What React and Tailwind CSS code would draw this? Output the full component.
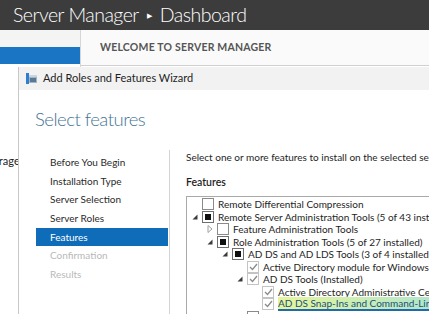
import React from 'react';

const navItems = [
  { label: 'Before You Begin', state: 'done' },
  { label: 'Installation Type', state: 'done' },
  { label: 'Server Selection', state: 'done' },
  { label: 'Server Roles', state: 'done' },
  { label: 'Features', state: 'active' },
  { label: 'Confirmation', state: 'off' },
  { label: 'Results', state: 'off' },
];

const indent = ['pl-[0px]', 'pl-[15px]', 'pl-[30px]', 'pl-[45px]', 'pl-[60px]'];

const tree = [
  { level: 0, exp: null, box: 'empty', label: 'Remote Differential Compression' },
  { level: 0, exp: 'open', box: 'partial', label: 'Remote Server Administration Tools (5 of 43 installed)' },
  { level: 1, exp: 'closed', box: 'empty', label: 'Feature Administration Tools' },
  { level: 1, exp: 'open', box: 'partial', label: 'Role Administration Tools (5 of 27 installed)' },
  { level: 2, exp: 'open', box: 'partial', label: 'AD DS and AD LDS Tools (3 of 4 installed)' },
  { level: 3, exp: null, box: 'checked', label: 'Active Directory module for Windows PowerShell' },
  { level: 3, exp: 'open', box: 'checked', label: 'AD DS Tools (Installed)' },
  { level: 4, exp: null, box: 'checked', label: 'Active Directory Administrative Center' },
  { level: 4, exp: null, box: 'checked', label: 'AD DS Snap-Ins and Command-Line Tools', hi: true },
  { level: 3, exp: null, box: 'empty', label: 'AD LDS Snap-Ins and Command-Line Tools' },
];

const Expander = ({ kind }) => {
  if (kind === 'open')
    return (
      <svg width="6" height="6" viewBox="0 0 6 6">
        <polygon points="5.5,0.5 5.5,5.5 0.5,5.5" fill="#3a3a3a" />
      </svg>
    );
  if (kind === 'closed')
    return (
      <svg width="6" height="8" viewBox="0 0 6 8">
        <polygon points="1,0.5 5,4 1,7.5" fill="none" stroke="#a0a0a0" strokeWidth="1" />
      </svg>
    );
  return null;
};

const Check = ({ kind }) => {
  if (kind === 'partial')
    return (
      <div className="w-[12px] h-[12px] border border-[#6f6f6f] bg-white flex items-center justify-center shrink-0">
        <div className="w-[6px] h-[6px] bg-[#111]" />
      </div>
    );
  if (kind === 'checked')
    return (
      <div className="w-[12px] h-[12px] border border-[#c4c4c4] bg-white flex items-center justify-center shrink-0">
        <svg width="9" height="8" viewBox="0 0 9 8">
          <polyline points="1,4 3.5,6.5 8,1" fill="none" stroke="#8a8a8a" strokeWidth="1.3" />
        </svg>
      </div>
    );
  return <div className="w-[12px] h-[12px] border border-[#8a8a8a] bg-white shrink-0" />;
};

const TreeRow = ({ level, exp, box, label, hi }) => (
  <div className={`h-[12.5px] flex items-center whitespace-nowrap ${indent[level]}`}>
    <div className="w-[15px] h-full flex items-center justify-center shrink-0">
      <Expander kind={exp} />
    </div>
    <Check kind={box} />
    <span
      className={`ml-[4px] leading-[12px] ${
        hi
          ? 'bg-gradient-to-r from-[#e6f59a] to-[#a6e3d2] text-[#1b4f7a] border-b-2 border-[#1f6aa8]'
          : 'text-[#1e1e1e]'
      }`}
    >
      {label}
    </span>
  </div>
);

export default function App() {
  return (
    <div
      className="relative w-[429px] h-[314px] overflow-hidden bg-white flex flex-col"
      style={{ fontFamily: 'Lato, "Open Sans", sans-serif' }}
    >
      {/* server manager header */}
      <div className="h-[30px] bg-[#3c3c3c] shrink-0 flex items-center pl-[13px] text-white text-[19.5px] font-light tracking-[-0.5px] leading-none whitespace-nowrap">
        <span>Server Manager</span>
        <span className="text-[7px] mx-[8px] tracking-normal">▶</span>
        <span>Dashboard</span>
      </div>

      <div className="flex flex-1">
        {/* left nav */}
        <div className="w-[80px] shrink-0 flex flex-col">
          <div className="h-[17px] bg-[#f4f4f4]" />
          <div className="h-[17px] bg-[#1b75c5]" />
          <div className="h-[3px] bg-white" />
          <div className="flex-1 bg-white pt-[86px] ml-[-17px] text-[11px] text-[#222]">Storage</div>
        </div>
        <div className="w-px h-[37px] bg-[#d6d6d6]" />
        {/* welcome area */}
        <div className="flex-1 flex flex-col">
          <div className="h-[36px] bg-[#fafafa] border-b border-[#d0d0d0] flex items-center pl-[19px] text-[10.5px] font-bold text-[#555] tracking-[0.2px]">
            WELCOME TO SERVER MANAGER
          </div>
        </div>
      </div>

      {/* wizard window */}
      <div className="absolute left-[18px] top-[67px] w-[430px] h-[260px] bg-white border-l border-[#c8c8c8] flex flex-col">
        <div className="h-[23px] bg-[#f2f2f2] flex items-center pl-[7px] gap-[6px] text-[11px] text-[#1e1e1e] shrink-0">
          <svg width="11" height="11" viewBox="0 0 11 11">
            <rect x="0" y="0" width="3" height="11" fill="#2f7fd0" />
            <rect x="3" y="2" width="8" height="8" fill="#9fb6c8" />
            <rect x="4" y="5" width="6" height="4" fill="#5a7890" />
            <rect x="3" y="2" width="8" height="2" fill="#c9d6e0" />
          </svg>
          <span>Add Roles and Features Wizard</span>
        </div>
        <div className="h-[60px] pl-[16px] pt-[20px] text-[18.5px] font-light tracking-[-0.5px] text-[#3f7493] leading-none shrink-0">
          Select features
        </div>
        <div className="flex flex-1">
          <div className="w-[151px] shrink-0 border-r border-[#d4d4d4] flex flex-col pt-[3px] pl-[17px] text-[10px]">
            {navItems.map((n) => (
              <div
                key={n.label}
                className={`h-[18.7px] flex items-center pl-[14px] mr-[1px] ${
                  n.state === 'active'
                    ? 'bg-[#0f6cb8] text-white'
                    : n.state === 'off'
                    ? 'text-[#b9b9b9]'
                    : 'text-[#2a2a2a]'
                }`}
              >
                {n.label}
              </div>
            ))}
          </div>
          <div className="flex-1 pl-[16px] pt-[1px] text-[10px] text-[#1e1e1e] whitespace-nowrap">
            <div className="h-[13px] flex items-center">Select one or more features to install on the selected server.</div>
            <div className="h-[12px] mt-[13px] flex items-center font-semibold text-[10.5px]">Features</div>
            <div className="mt-[7px] border-l border-t border-[#a9a9a9] pt-[1px] h-[200px]">
              {tree.map((r) => (
                <TreeRow key={r.label} {...r} />
              ))}
            </div>
          </div>
        </div>
      </div>
    </div>
  );
}
